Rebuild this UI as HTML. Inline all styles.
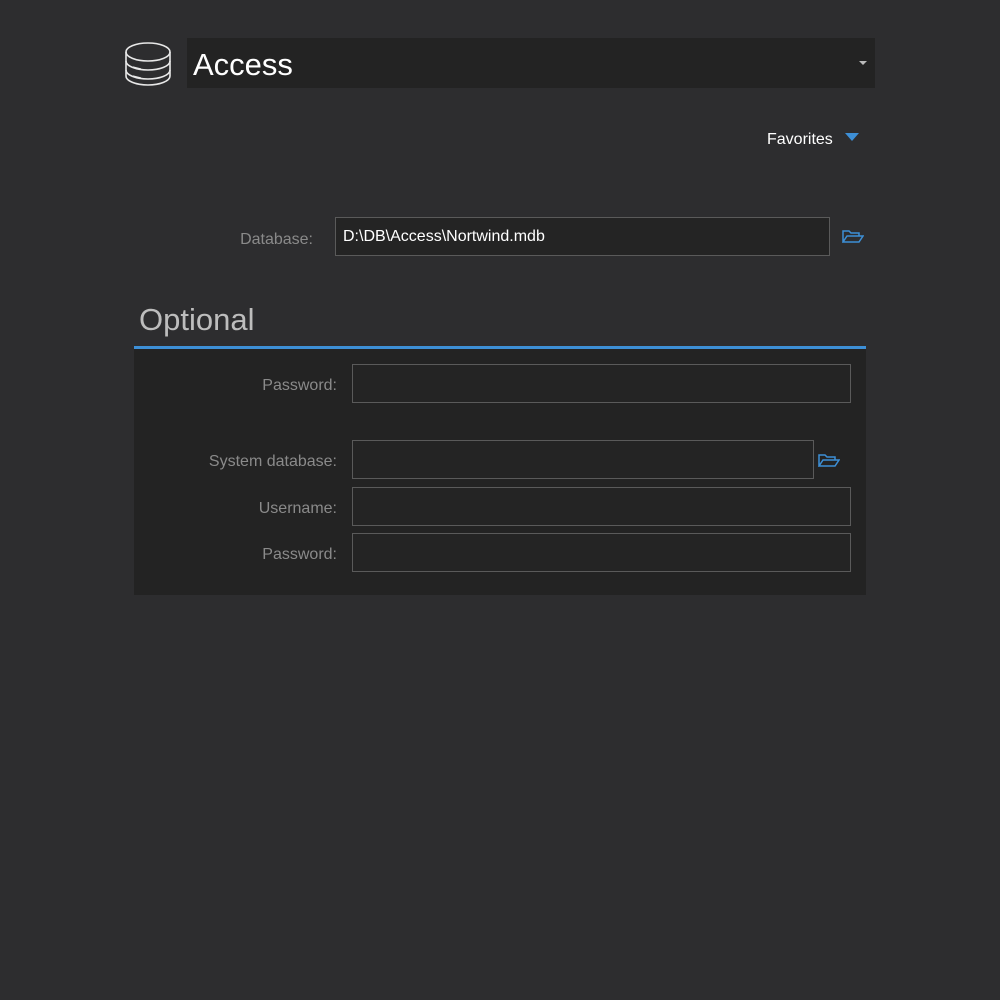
<!DOCTYPE html>
<html><head><style>
body{margin:0;background:#2d2d2f;width:1000px;height:1000px;position:relative;font-family:"Liberation Sans",sans-serif;overflow:hidden}
.a{position:absolute}
.lbl{position:absolute;color:#8a8a8a;font-size:16px;text-align:right}
.inp{position:absolute;background:#242424;border:1px solid #5a5a5a;box-sizing:border-box}
</style></head><body>
<svg class="a" style="left:123px;top:40px" width="52" height="48" viewBox="0 0 52 48" fill="none" stroke="#e8e8e8" stroke-width="1.6">
<ellipse cx="25" cy="12" rx="22" ry="9"/>
<path d="M3 12v9c0 5 10 9 22 9s22-4 22-9v-9"/>
<path d="M3 21v9c0 5 10 9 22 9s22-4 22-9v-9"/>
<path d="M3 30v6c0 5 10 9 22 9s22-4 22-9v-6"/>
<path d="M10 27l8 2M10 36l8 2" stroke-width="1.2"/>
</svg>
<div class="a" style="left:187px;top:38px;width:688px;height:50px;background:#232323"></div>
<div class="a" style="left:193px;top:47px;color:#fff;font-size:31px">Access</div>
<div class="a" style="left:859px;top:61px;width:0;height:0;border-left:4px solid transparent;border-right:4px solid transparent;border-top:4px solid #bbb"></div>
<div class="a" style="left:767px;top:131px;color:#fff;font-size:16px">Favorites</div>
<div class="a" style="left:845px;top:133px;width:0;height:0;border-left:7px solid transparent;border-right:7px solid transparent;border-top:8px solid #3d8fd6"></div>
<div class="lbl" style="left:200px;top:231px;width:113px">Database:</div>
<div class="inp" style="left:335px;top:217px;width:495px;height:39px"></div>
<div class="a" style="left:343px;top:228px;color:#fff;font-size:16px">D:\DB\Access\Nortwind.mdb</div>
<svg class="a" style="left:842px;top:229px" width="22" height="15" viewBox="0 0 22 15" fill="none" stroke="#3d8fd6" stroke-width="1.5"><path d="M1 13V2h6l2 2h8v3M1 13l4-6h16l-4 6z"/></svg>
<div class="a" style="left:139px;top:302px;color:#bdbdbd;font-size:31px">Optional</div>
<div class="a" style="left:134px;top:346px;width:732px;height:3px;background:#3d8fd6"></div>
<div class="a" style="left:134px;top:349px;width:732px;height:246px;background:#232323"></div>
<div class="lbl" style="left:180px;top:377px;width:157px">Password:</div>
<div class="inp" style="left:352px;top:364px;width:499px;height:39px"></div>
<div class="lbl" style="left:180px;top:453px;width:157px">System database:</div>
<div class="inp" style="left:352px;top:440px;width:462px;height:39px"></div>
<svg class="a" style="left:818px;top:453px" width="22" height="15" viewBox="0 0 22 15" fill="none" stroke="#3d8fd6" stroke-width="1.5"><path d="M1 13V2h6l2 2h8v3M1 13l4-6h16l-4 6z"/></svg>
<div class="lbl" style="left:180px;top:500px;width:157px">Username:</div>
<div class="inp" style="left:352px;top:487px;width:499px;height:39px"></div>
<div class="lbl" style="left:180px;top:546px;width:157px">Password:</div>
<div class="inp" style="left:352px;top:533px;width:499px;height:39px"></div>
</body></html>
